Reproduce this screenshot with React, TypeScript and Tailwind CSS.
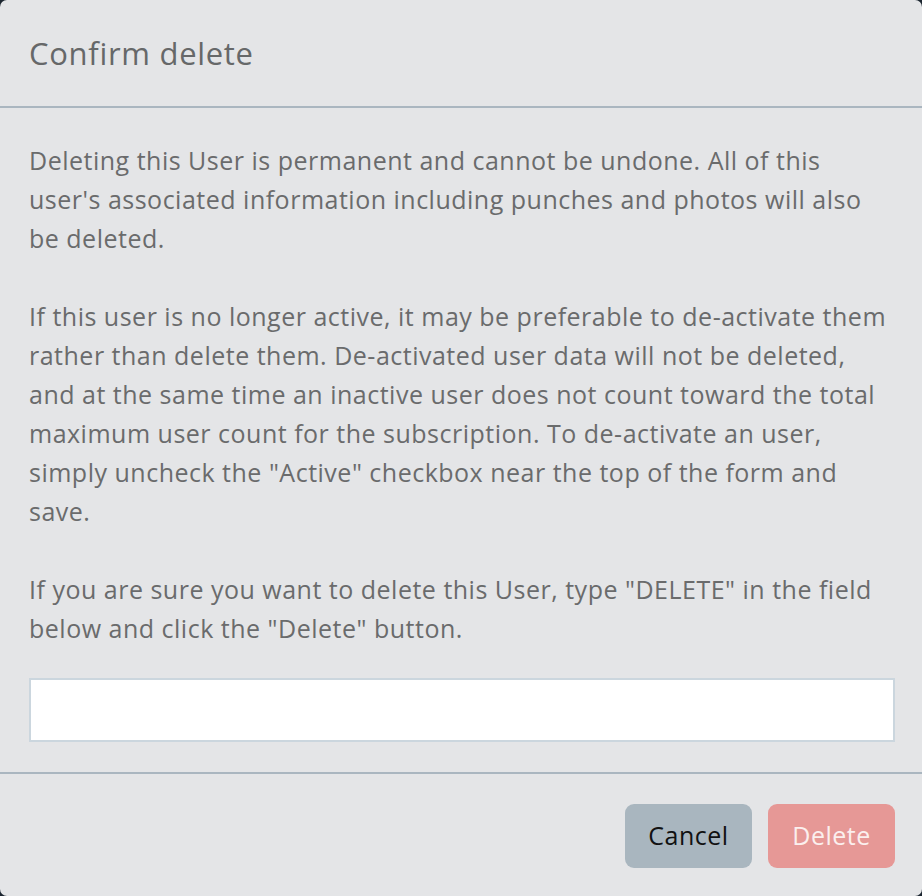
import { useState } from 'react'

export default function App() {
  const [confirmText, setConfirmText] = useState('')

  return (
    <div className="h-[896px] w-[922px] bg-[#1c2630] font-['Open_Sans',sans-serif]">
      <div className="flex h-full w-full flex-col overflow-hidden rounded-[7px] bg-[#e4e5e7]">
        <div className="flex h-[108px] items-center border-b-2 border-[#aab6c0] px-[29px]">
          <h2 className="text-[31px] leading-none tracking-[0.7px] text-[#666869]">Confirm delete</h2>
        </div>

        <div className="flex flex-col gap-[39px] px-[29px] pt-[33px] pb-[30px] text-[25px] leading-[39px] tracking-[0.5px] text-[#6a6b6c]">
          <p>
            Deleting this User is permanent and cannot be undone. All of this
            user's associated information including punches and photos will
            also be deleted.
          </p>
          <p>
            If this user is no longer active, it may be preferable to
            de-activate them rather than delete them. De-activated user data
            will not be deleted, and at the same time an inactive user does not
            count toward the total maximum user count for the subscription. To
            de-activate an user, simply uncheck the "Active" checkbox near the
            top of the form and save.
          </p>
          <p>
            If you are sure you want to delete this User, type "DELETE" in the
            field below and click the "Delete" button.
          </p>
        </div>

        <div className="pl-[29px] pr-[27px] pb-[30px]">
          <input
            className="h-[64px] w-full border-2 border-[#cbd6de] bg-white px-3 text-[24px] outline-none"
            value={confirmText}
            onChange={e => setConfirmText(e.target.value)}
          />
        </div>

        <div className="flex justify-end gap-[16px] border-t-2 border-[#aab6c0] px-[27px] pt-[30px]">
          <button className="h-[64px] w-[127px] rounded-[9px] bg-[#a9b6bf] text-[25px] tracking-[0.5px] text-[#111]">
            Cancel
          </button>
          <button
            disabled={confirmText !== 'DELETE'}
            className="h-[64px] w-[127px] rounded-[9px] bg-[#e69896] text-[25px] tracking-[0.5px] text-[#fbefee]"
          >
            Delete
          </button>
        </div>
      </div>
    </div>
  )
}
